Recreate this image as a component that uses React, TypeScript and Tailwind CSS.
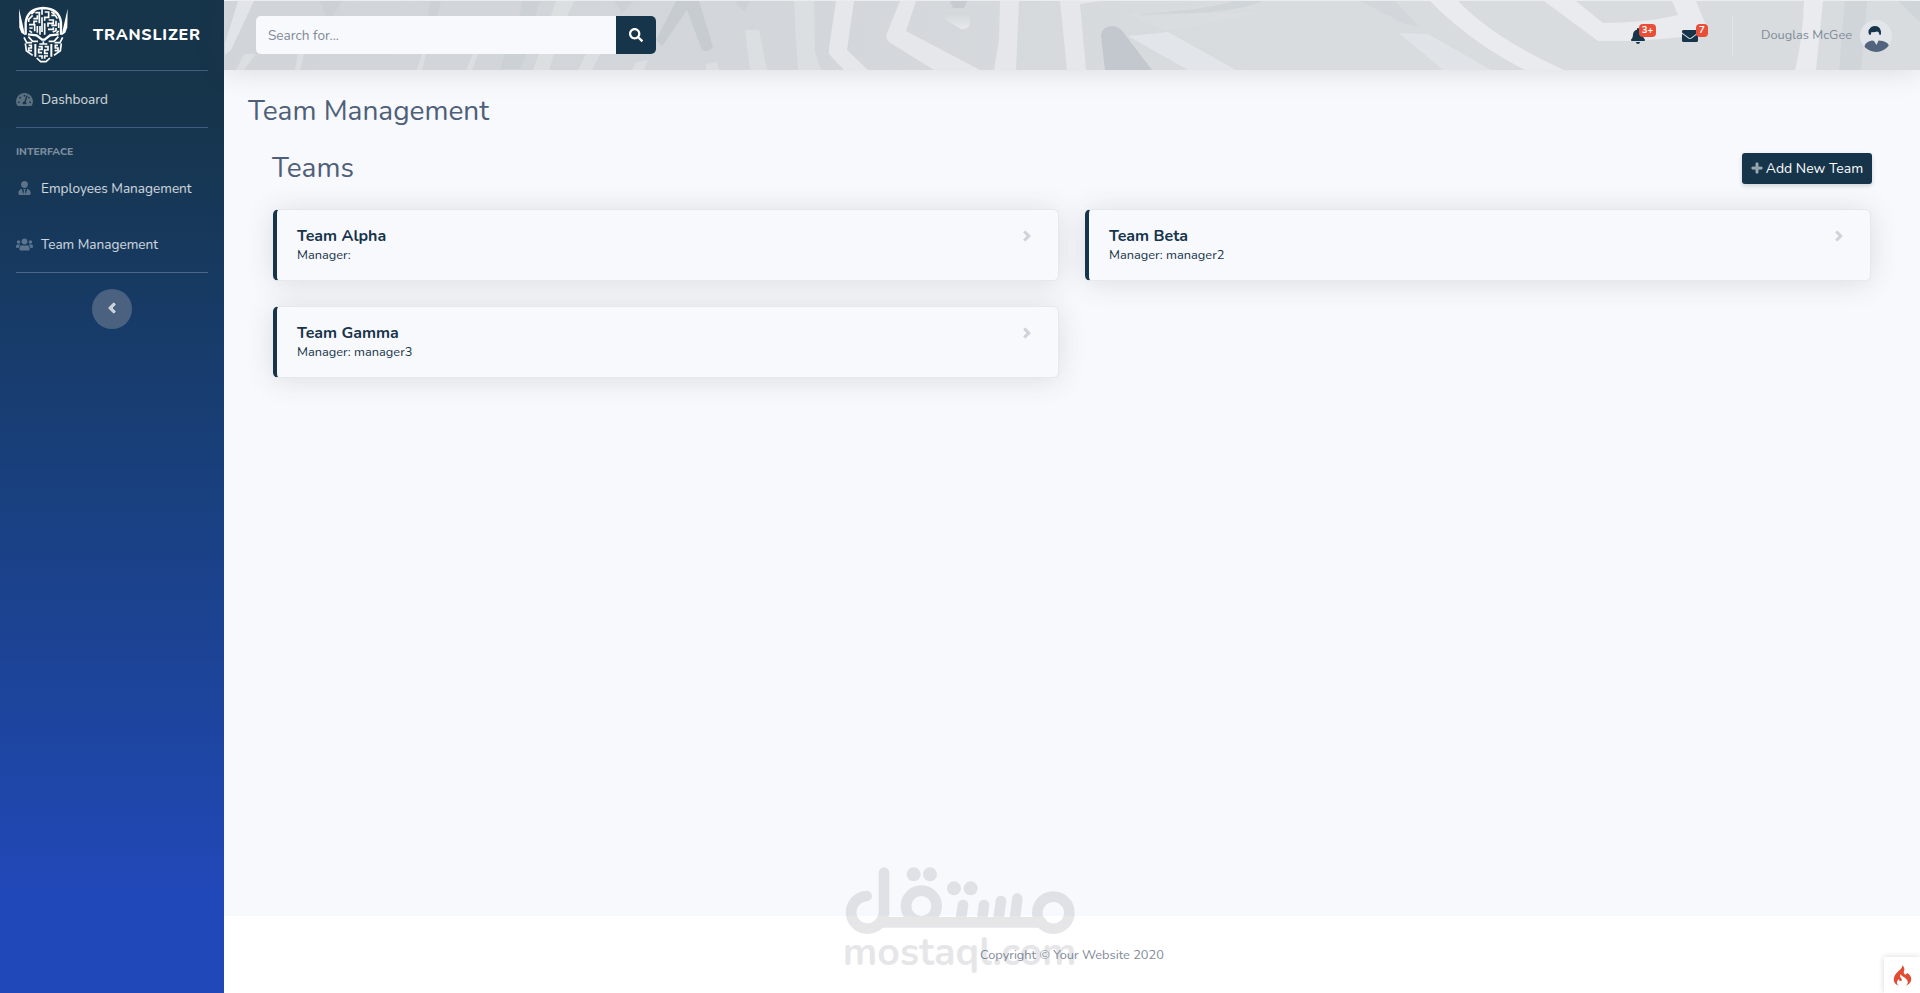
import React from 'react';
import {
  FaAngleLeft,
  FaAngleRight,
  FaBell,
  FaEnvelope,
  FaPlus,
  FaSearch,
  FaTachometerAlt,
  FaUserTie,
  FaUsers,
} from 'react-icons/fa';
import { SiCodeigniter } from 'react-icons/si';

const teams = [
  { name: 'Team Alpha', manager: '' },
  { name: 'Team Beta', manager: 'manager2' },
  { name: 'Team Gamma', manager: 'manager3' },
];

const BrandMark = () => (
  <svg viewBox="0 0 180 198" className="h-[66px] w-[60px]" fill="none" stroke="#fff" strokeWidth="5">
    {/* ears */}
    <path d="M15 26 L27 78 L33 106 L22 98 L16 82 Z" fill="#fff" stroke="none" />
    <path d="M161 26 L149 78 L143 106 L154 98 L160 82 Z" fill="#fff" stroke="none" />
    {/* head outline */}
    <path d="M35 104 V68 Q40 26 88 24 Q136 26 141 68 V104" strokeWidth="7" />
    {/* circuit lines */}
    <path
      d="M44 66 V58 L56 46 M52 42 L62 34 M58 56 H70 V46 M64 38 H76 V70 M45 74 H60 V64 H70 M46 84 H56 M62 72 V94 M46 92 L54 98 M70 78 V98 M84 28 V44 M84 52 V96 M92 36 H104 V52 H92 V62 M92 70 V104 M112 36 L122 42 M112 46 H124 L130 56 M104 60 H118 V70 H102 V80 M126 62 V76 H112 M134 68 V84 M102 88 H118 V82 M126 84 V92 L116 96 M134 92 L128 100 M78 78 V104"
      strokeWidth="5"
    />
    {/* brow and eyes */}
    <path d="M42 103 L68 106 L84 119 H92 L108 106 L134 103" strokeWidth="7" />
    <path d="M43 110 L56 124 H72 M133 110 L120 124 H104" />
    <path d="M30 112 L38 128 H54 M146 112 L138 128 H122" strokeWidth="5" />
    {/* jaw */}
    <path d="M64 132 V170 M112 132 V170" strokeWidth="6" />
    <path d="M34 130 L37 152 L56 166 M142 130 L139 152 L120 166 M68 174 L80 185 H96 L108 174" strokeWidth="5" />
    <path
      d="M44 136 H52 V144 H44 V152 H54 M132 136 H124 V144 H132 V152 H122 M76 132 H100 M74 140 H84 V148 H74 V158 H84 M92 140 H102 V150 H92 V160 H102 M74 168 H84 V176 M92 176 V168 H102 M88 124 V134"
      strokeWidth="5"
    />
  </svg>
);

const TopbarPattern = () => (
  <svg viewBox="224 1 1696 69" preserveAspectRatio="none" className="absolute inset-0 h-full w-full">
    <defs>
      <linearGradient id="topbar-base">
        <stop offset="0" stopColor="#d1d5d9" />
        <stop offset="0.35" stopColor="#d3d7db" />
        <stop offset="0.6" stopColor="#d8dcdf" />
        <stop offset="1" stopColor="#d8dcdf" />
      </linearGradient>
      <linearGradient id="topbar-drop" x1="0" x2="0" y1="0" y2="1">
        <stop offset="0" stopColor="#d3d7da" />
        <stop offset="1" stopColor="#e7e9ed" />
      </linearGradient>
    </defs>
    <rect x="224" y="1" width="1696" height="69" fill="url(#topbar-base)" />
    {/* dark strokes */}
    <g fill="#c3c8ce">
      <path d="M676 1H699L713 47Q708 53 702 50L687 10L662 46L656 40Z" opacity=".75" />
      <path d="M1101 36Q1102 26 1112 26Q1119 26 1123 32L1152 70H1105Z" />
      <path d="M950 1H967L964 8H953Z" opacity=".8" />
      <path d="M320 1H342L333 16H326ZM430 1H441L437 16H428ZM522 1H540L535 16H520ZM614 1H634L622 13ZM734 1H750L744 12ZM505 54H526L520 69H500Z" opacity=".35" />
      <path d="M1140 14Q1215 9 1232 1H1262Q1240 13 1140 16Z" opacity=".35" />
      <path d="M1360 1H1395L1420 27L1405 24Z" opacity=".25" />
      <path d="M1845 1H1867L1861 70H1839ZM1898 1H1920V22Z" opacity=".35" />
    </g>
    {/* pale bands */}
    <g fill="#dcdfe1">
      <path d="M794 1H814L815 52L821 70H798L796 40Z" />
      <path d="M556 1H574L567 16H551ZM539 54H554L549 70H533ZM586 54H600L592 70H578ZM473 54H478L472 70H466ZM298 54H304L300 70H295ZM422 54H426L422 70H417Z" />
      <path d="M745 30H759L767 70H750ZM706 64L717 62L719 70H706ZM636 62L648 60L644 70H632Z" />
      <path d="M244 54H256L244 70H236Z" />
      <path d="M1128 14L1262 12L1167 32Z" opacity=".5" />
    </g>
    {/* light bands */}
    <g fill="#e5e7eb">
      <path d="M238 1H254L231 50L225 55V43Z" opacity=".8" />
      <path d="M836 1H854L847 50L868 70H844L829 54V48Z" />
      <path d="M900 1H916L906 31L980 70H934L889 42Q885 38 887 33Z" />
      <path d="M944 13H970V24Q968 30 961 29L946 20Z" fill="url(#topbar-drop)" />
      <path d="M1000 1H1019L1016 70H994L999 40ZM1060 1H1100L1080 4L1086 70H1067Z" />
      <path d="M1128 36L1168 32L1236 70H1188Z" opacity=".8" />
      <path d="M1399 33L1428 34L1491 70H1443Z" opacity=".65" />
    </g>
    <g fill="#e9ebee">
      <path d="M1430 1H1458Q1495 39 1564 70H1525Q1470 42 1430 1Z" />
      <path
        fillRule="evenodd"
        d="M1544 1H1576L1603 23Q1645 23 1678 15L1672 1H1696L1706 25Q1700 36 1684 37L1636 41H1598Z"
      />
      <path d="M1804 1H1823L1816 70H1795Q1803 38 1804 1Z" />
    </g>
  </svg>
);

const Avatar = () => (
  <svg viewBox="0 0 32 32" className="h-8 w-8 rounded-full">
    <rect width="32" height="32" fill="#e2e5ea" />
    <path d="M4.500 27Q4.500 22 12 20.500L14 21L16.500 25L18.500 20.500Q28 21 29 26Q24 32 17 32Q9 32 4.500 27Z" fill="#52647d" />
    <path d="M9 14.500Q7.500 10 10 8.500Q11 6 15 6Q21.500 6 21 14.500L19.500 15Q19.500 12 17.500 11.500Q13 12.500 11.500 12L10.500 15Z" fill="#16344a" />
  </svg>
);

const Watermark = () => (
  <svg
    viewBox="0 0 1080 429"
    className="pointer-events-none absolute bottom-0 left-[820px] h-[143px] w-[360px]"
    fill="none"
    stroke="#777b89"
    strokeWidth="32"
    strokeLinecap="round"
    opacity=".18"
  >
    <circle cx="700" cy="188" r="48" />
    <circle cx="304" cy="168" r="46" />
    <path d="M140 138A49 49 0 1 0 189 202L192 190V68M180 217H665" />
    <path d="M592 146L584 210M543 153L535 210M492 165L486 210M429 165L422 210" />
    <g fill="#777b89" stroke="none">
      <circle cx="281" cy="73" r="21" />
      <circle cx="330" cy="73" r="21" />
      <circle cx="402" cy="115" r="21" />
      <circle cx="452" cy="115" r="21" />
      <text x="68" y="346" textLength="702" lengthAdjust="spacingAndGlyphs" className="text-[120px] font-bold">
        mostaql.com
      </text>
    </g>
  </svg>
);

const Sidebar = () => (
  <aside className="flex w-56 shrink-0 flex-col bg-linear-to-b from-[#16344a] from-10% to-[#2148b8] to-90% text-[13.6px] text-white/80">
    <a className="flex h-[70px] items-start pl-[14px] text-white">
      <BrandMark />
      <span className="mt-[23px] ml-[19px] text-[16px] leading-6 font-extrabold tracking-[0.8px]">TRANSLIZER</span>
    </a>
    <hr className="mx-4 border-[#3f5e86]" />
    <a className="flex h-14 items-center gap-2 px-4">
      <FaTachometerAlt className="w-[17px] text-[15px] text-white/30" />
      <span className="pt-0.5">Dashboard</span>
    </a>
    <hr className="mx-4 border-[#3f5e86]" />
    <div className="mt-4 px-4 text-[10.4px] leading-4 font-extrabold text-white/45">INTERFACE</div>
    <a className="flex h-14 items-center gap-2 px-4">
      <FaUserTie className="w-[17px] text-[14px] text-white/30" />
      <span className="pt-0.5">Employees Management</span>
    </a>
    <a className="flex h-14 items-center gap-2 px-4">
      <FaUsers className="w-[17px] text-[17px] text-white/30" />
      <span className="pt-0.5">Team Management</span>
    </a>
    <hr className="mx-4 border-[#4d6888]" />
    <button className="mt-4 flex h-10 w-10 items-center justify-center self-center rounded-full bg-[#4a6180] pr-px pb-0.5 text-[16px] text-white/70">
      <FaAngleLeft stroke="currentColor" strokeWidth="28" />
    </button>
  </aside>
);

const Topbar = () => (
  <header className="relative mt-px h-[69px] shadow-[0_2px_28px_rgba(58,59,69,0.15)]">
    <TopbarPattern />
    <div className="relative flex h-full items-center pr-7 pl-8">
      <div className="mb-0.5 flex h-[38px] w-[400px] overflow-hidden rounded-[5px] bg-[#f8f9fc]">
        <input
          className="flex-1 px-3 pt-1 text-[13.6px] outline-none placeholder:text-[#7f8997]"
          placeholder="Search for..."
        />
        <button className="flex w-10 items-center justify-center bg-[#16344a] text-[14px] text-white">
          <FaSearch />
        </button>
      </div>
      <div className="ml-auto flex items-center">
        <div className="relative text-[#16344a]">
          <FaBell className="text-[16px]" />
          <span className="absolute -top-1 left-[9px] flex h-[13px] w-[17px] items-center justify-center rounded-[4px] bg-[#e74f38] text-[9.6px] font-bold text-white">
            3+
          </span>
        </div>
        <div className="relative ml-9 text-[#16344a]">
          <FaEnvelope className="text-[16px]" />
          <span className="absolute -top-1 left-[14px] flex h-[13px] w-3 items-center justify-center rounded-[4px] bg-[#e74f38] text-[9.6px] font-bold text-white">
            7
          </span>
        </div>
        <div className="ml-[34px] h-[38px] w-px bg-[#e2e5e9]" />
        <span className="mr-2 ml-7 text-[12.8px] text-[#808b99]">Douglas McGee</span>
        <Avatar />
      </div>
    </div>
  </header>
);

const TeamCard = ({ name, manager }: { name: string; manager: string }) => (
  <div className="flex h-[72px] justify-between rounded-[5.600px] border border-l-4 border-[#e6e8ec] border-l-[#16344a] bg-[#f8f9fc] pt-4 pr-[23px] pl-5 text-[#16344a] shadow-[0_2px_28px_rgba(58,59,69,0.15)]">
    <div>
      <h5 className="text-[16px] leading-5 font-bold">{name}</h5>
      <p className="text-[12.8px] leading-[19px]">Manager: {manager}</p>
    </div>
    <FaAngleRight className="mt-0.5 text-[16px] text-[#d0d3d9]" stroke="currentColor" strokeWidth="28" />
  </div>
);

const App = () => {
  return (
    <div className="relative flex h-[993px] w-full overflow-hidden bg-[#f8f9fc] font-['Nunito','Lato',sans-serif]">
      <Sidebar />
      <div className="flex min-w-0 flex-1 flex-col">
        <Topbar />
        <main className="flex-1 px-6 pt-6">
          <h1 className="text-[28px] leading-[34px] text-[#4e6079]">Team Management</h1>
          <section className="px-6 pt-[23px]">
            <div className="flex items-center justify-between">
              <h2 className="text-[28px] leading-[34px] text-[#4e6079]">Teams</h2>
              <button className="flex h-[31px] w-[130px] items-center justify-center gap-[3px] rounded-[3px] bg-[#16344a] text-[14px] text-white shadow-[0_2px_4px_rgba(58,59,69,0.2)]">
                <FaPlus className="text-[12px] text-white/50" stroke="currentColor" strokeWidth="30" />
                Add New Team
              </button>
            </div>
            <div className="mt-6 grid grid-cols-2 gap-x-[26px] gap-y-[25px] px-px">
              {teams.map((team) => (
                <TeamCard key={team.name} name={team.name} manager={team.manager} />
              ))}
            </div>
          </section>
        </main>
        <footer className="flex h-[77px] items-center justify-center bg-white pt-[3px] text-[12.8px] text-[#7f8a99]">
          Copyright © Your Website 2020
        </footer>
      </div>
      <Watermark />
      <div className="absolute right-0 bottom-0 flex h-9 w-9 items-center justify-center bg-white text-[21px] text-[#e14d33] shadow-[0_0_6px_rgba(58,59,100,0.2)]">
        <SiCodeigniter />
      </div>
    </div>
  );
};

export default App;
